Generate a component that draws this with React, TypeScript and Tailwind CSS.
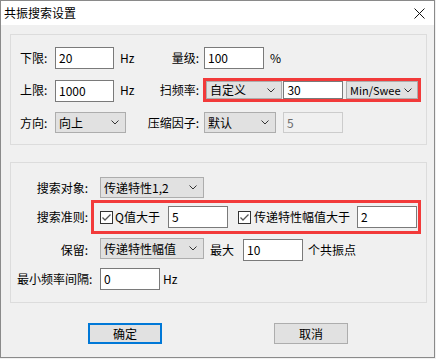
import React from "react";

const Chevron = () => (
  <svg width="8" height="5" viewBox="0 0 8 5" className="shrink-0">
    <polyline points="0.5,0.5 4,4 7.5,0.5" fill="none" stroke="#333" strokeWidth="1" />
  </svg>
);

const Check = () => (
  <svg width="13" height="13" viewBox="0 0 13 13" className="shrink-0">
    <rect x="0.5" y="0.5" width="12" height="12" fill="#fff" stroke="#333" />
    <polyline points="2.5,6.5 5,9 10.5,3.5" fill="none" stroke="#555" strokeWidth="1.3" />
  </svg>
);

const TextBox = ({ value, className = "" }: { value: string; className?: string }) => (
  <div className={`flex items-center bg-white border border-[#7a7a7a] pl-[3px] text-[12px] leading-[14px] text-black ${className}`}>
    {value}
  </div>
);

const Dropdown = ({ value, className = "" }: { value: string; className?: string }) => (
  <div className={`flex items-center justify-between gap-[3px] bg-[#e1e1e1] border border-[#adadad] pl-[3px] pr-[6px] leading-[14px] text-black ${className}`}>
    <span className="whitespace-nowrap">{value}</span>
    <Chevron />
  </div>
);

export default function App() {
  return (
    <div className="w-[436px] h-[359px] bg-[#f0f0f0] font-['Noto_Sans_CJK_SC',sans-serif] text-[12px] leading-[14px] text-black">
      <div className="w-[435px] h-[358px] border border-[#8a8a8a] flex flex-col bg-[#f0f0f0]">
        {/* title bar */}
        <div className="h-[24px] bg-white flex items-center justify-between pl-[3px] pr-[9px]">
          <span className="text-[12px]">共振搜索设置</span>
          <svg width="11" height="11" viewBox="0 0 11 11">
            <path d="M0.5 0.5 L10.5 10.5 M10.5 0.5 L0.5 10.5" stroke="#111" strokeWidth="1" />
          </svg>
        </div>

        <div className="pl-[9px] pt-[9px] flex flex-col">
          {/* group 1 */}
          <div className="w-[417px] h-[111px] border border-[#dcdcdc] flex flex-col pt-[12px]">
            <div className="flex items-center h-[22px]">
              <span className="w-[44px] pl-[9px]">下限:</span>
              <TextBox value="20" className="w-[59px] h-[22px]" />
              <span className="w-[36px] pl-[6px]">Hz</span>
              <span className="w-[49px] text-right">量级:</span>
              <TextBox value="100" className="ml-[5px] w-[60px] h-[22px]" />
              <span className="ml-[6px]">%</span>
            </div>
            <div className="flex items-center h-[24px] mt-[9px]">
              <span className="w-[44px] pl-[9px]">上限:</span>
              <TextBox value="1000" className="w-[59px] h-[22px] self-end" />
              <span className="w-[36px] pl-[6px]">Hz</span>
              <span className="w-[49px] text-right">扫频率:</span>
              <div className="ml-[4px] h-[24px] w-[218px] border-[3px] border-[#f23a3a] flex items-center">
                <Dropdown value="自定义" className="w-[77px] h-[18px] text-[12px]" />
                <TextBox value="30" className="ml-[1px] w-[60px] h-[18px]" />
                <Dropdown value="Min/Swee" className="ml-[3px] w-[72px] h-[18px] pr-[5px] text-[11px]" />
              </div>
            </div>
            <div className="flex items-center h-[21px] mt-[10px]">
              <span className="w-[44px] pl-[9px]">方向:</span>
              <Dropdown value="向上" className="w-[71px] h-[21px] text-[12px]" />
              <span className="w-[73px] text-right">压缩因子:</span>
              <Dropdown value="默认" className="ml-[5px] w-[72px] h-[21px] text-[12px]" />
              <div className="ml-[7px] w-[60px] h-[21px] border border-[#cccccc] bg-[#f0f0f0] pl-[3px] flex items-center text-[#6d6d6d]">
                5
              </div>
            </div>
          </div>

          {/* group 2 */}
          <div className="mt-[17px] w-[417px] h-[141px] border border-[#dcdcdc] flex flex-col pt-[14px]">
            <div className="flex items-center h-[21px]">
              <span className="w-[77px] text-right">搜索对象:</span>
              <Dropdown value="传递特性1,2" className="ml-[12px] w-[104px] h-[21px] text-[12px]" />
            </div>
            <div className="flex items-center h-[34px] mt-[2px]">
              <span className="w-[77px] text-right">搜索准则:</span>
              <div className="ml-[3px] w-[330px] h-[34px] border-[3px] border-[#f23a3a] flex items-center pl-[6px]">
                <Check />
                <span className="ml-[2px] w-[53px]">Q值大于</span>
                <TextBox value="5" className="w-[60px] h-[22px]" />
                <span className="ml-[10px]">
                  <Check />
                </span>
                <span className="ml-[3px] w-[103px]">传递特性幅值大于</span>
                <TextBox value="2" className="w-[60px] h-[22px]" />
              </div>
            </div>
            <div className="flex items-center h-[23px] mt-[4px]">
              <span className="w-[77px] text-right">保留:</span>
              <Dropdown value="传递特性幅值" className="ml-[12px] w-[104px] h-[21px] self-start text-[12px]" />
              <span className="ml-[6px] w-[33px]">最大</span>
              <TextBox value="10" className="w-[60px] h-[22px]" />
              <span className="ml-[5px]">个共振点</span>
            </div>
            <div className="flex items-center h-[22px] mt-[7px]">
              <span className="w-[89px] pl-[6px]">最小频率间隔:</span>
              <TextBox value="0" className="w-[60px] h-[22px]" />
              <span className="ml-[3px]">Hz</span>
            </div>
          </div>
        </div>

        {/* buttons */}
        <div className="flex mt-[20px] pl-[87px]">
          <button className="w-[74px] h-[21px] bg-[#e1e1e1] border-2 border-[#0078d7] flex items-center justify-center">
            确定
          </button>
          <button className="ml-[112px] w-[74px] h-[21px] bg-[#e1e1e1] border border-[#adadad] flex items-center justify-center">
            取消
          </button>
        </div>
      </div>
    </div>
  );
}
